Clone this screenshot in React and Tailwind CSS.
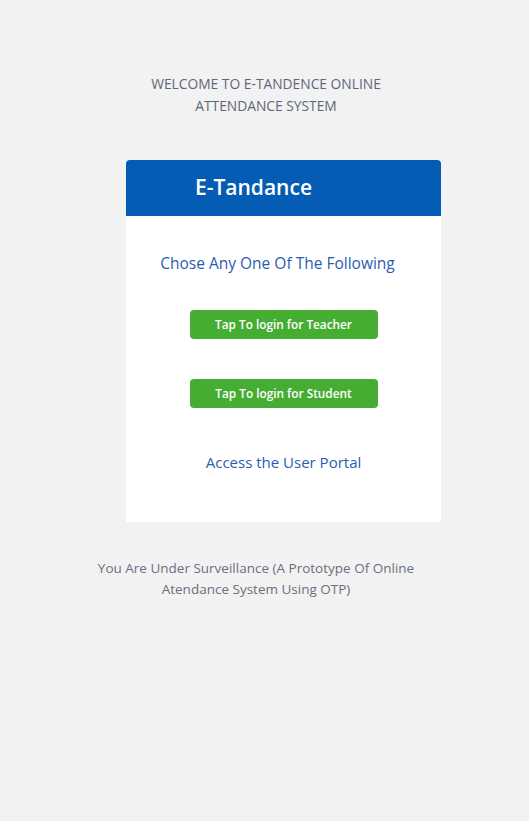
import React from "react";

const FONT = { fontFamily: '"Open Sans", "Noto Sans", "Liberation Sans", sans-serif' };

function LoginButton({ label }) {
  return (
    <button
      type="button"
      className="flex h-[29px] w-[188px] items-center justify-center rounded-[4px] bg-[#46ad33] text-[11.8px] font-semibold text-white"
    >
      {label}
    </button>
  );
}

export default function App() {
  return (
    <div className="min-h-[821px] w-full bg-[#f2f2f2] pt-[73px]" style={FONT}>
      <p className="ml-[146px] w-[240px] text-center text-[13.8px] leading-[22px] text-[#5d6778]">
        WELCOME TO E-TANDENCE ONLINE
        <br />
        ATTENDANCE SYSTEM
      </p>

      <div className="ml-[126px] mt-[43px] w-[315px] overflow-hidden rounded-t-[4px] bg-white">
        <div className="flex h-[56px] items-center bg-[#045cb4] pl-[69px]">
          <h1 className="text-[21px] font-semibold text-white">E-Tandance</h1>
        </div>

        <div className="flex flex-col items-center pb-[48px] pt-[35px]">
          <p className="mr-[12px] text-[15.5px] leading-[24px] text-[#2a5db0]">
            Chose Any One Of The Following
          </p>
          <div className="mt-[35px]">
            <LoginButton label="Tap To login for Teacher" />
          </div>
          <div className="mt-[40px]">
            <LoginButton label="Tap To login for Student" />
          </div>
          <a href="#" className="mt-[42px] text-[15px] leading-[24px] text-[#2a5db0]">
            Access the User Portal
          </a>
        </div>
      </div>

      <p className="ml-[86px] mt-[36px] w-[340px] text-center text-[13.5px] leading-[21px] text-[#6b6f80]">
        You Are Under Surveillance (A Prototype Of Online
        <br />
        Atendance System Using OTP)
      </p>
    </div>
  );
}
